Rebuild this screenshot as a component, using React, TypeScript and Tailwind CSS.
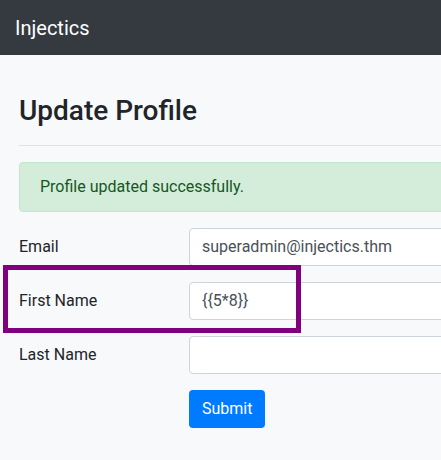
import { ReactElement } from "react";

interface FieldProps {
  label: string;
  value: string;
}

function Field({ label, value }: FieldProps): ReactElement {
  return (
    <div className="flex items-center mb-4">
      <label className="w-[170px] text-base text-[#212529]">{label}</label>
      <input
        type="text"
        defaultValue={value}
        className="flex-1 h-[38px] px-3 bg-white border border-[#ced4da] rounded text-base text-[#495057] outline-none"
      />
    </div>
  );
}

export default function App(): ReactElement {
  return (
    <div className="relative min-h-screen overflow-hidden bg-[#f8f9fa] font-['Roboto','Liberation_Sans',sans-serif]">
      <nav className="h-[55px] bg-[#343a40] px-[15px] flex items-center">
        <span className="text-[20px] text-white">Injectics</span>
      </nav>
      <div className="w-[800px] px-[19px]">
        <h2 className="mt-[39px] mb-2 text-[28px] leading-[1.2] font-medium text-[#212529]">Update Profile</h2>
        <hr className="mt-[17px] mb-4 border-t border-[#dfe0e1]" />
        <div className="mb-4 px-5 py-3 bg-[#d4edda] border border-[#c3e6cb] rounded text-base leading-6 text-[#155724]">
          Profile updated successfully.
        </div>
        <form>
          <Field label="Email" value="superadmin@injectics.thm" />
          <Field label="First Name" value="{{5*8}}" />
          <Field label="Last Name" value="" />
          <div className="pl-[170px]">
            <button type="submit" className="h-[38px] px-[13px] bg-[#007bff] text-white text-base rounded">Submit</button>
          </div>
        </form>
      </div>
      <div className="absolute left-[3px] top-[265px] w-[298px] h-[68px] border-[5px] border-[#800080]"></div>
    </div>
  );
}
